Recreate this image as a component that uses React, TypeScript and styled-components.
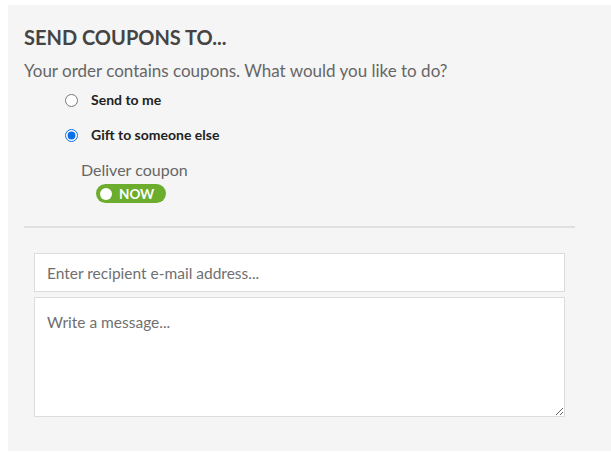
import React from "react";
import styled, { createGlobalStyle } from "styled-components";

const Global = createGlobalStyle`
  html, body { margin: 0; padding: 0; background: #fff; }
  body { padding: 5px 0 0 8px; font-family: Lato, "Liberation Sans", sans-serif; }
  * { box-sizing: border-box; }
`;

const Panel = styled.div`
  background: #f5f5f5;
  width: 603px;
  height: 446px;
  padding: 20px 36px 0 16px;
  display: flex;
  flex-direction: column;
`;

const Title = styled.h2`
  margin: 0;
  font-size: 20px;
  line-height: 24px;
  font-weight: 700;
  color: #444;
  letter-spacing: 0;
`;

const Intro = styled.p`
  margin: 12px 0 0;
  font-size: 17px;
  line-height: 20px;
  color: #666;
`;

const Options = styled.div`
  display: flex;
  flex-direction: column;
  gap: 15px;
  margin: 9px 0 0 41px;
`;

const Option = styled.label`
  display: flex;
  align-items: center;
  gap: 13px;
  font-size: 14px;
  line-height: 20px;
  font-weight: 700;
  color: #222;
`;

const Radio = styled.input`
  margin: 0;
  width: 13px;
  height: 13px;
  accent-color: #0a6fe8;
`;

const Deliver = styled.div`
  margin: 15px 0 0 57px;
  display: flex;
  flex-direction: column;
  align-items: flex-start;
`;

const DeliverLabel = styled.span`
  font-size: 16px;
  line-height: 20px;
  color: #666;
`;

const Toggle = styled.span`
  margin: 4px 0 0 15px;
  display: inline-flex;
  align-items: center;
  gap: 7px;
  width: 70px;
  height: 19px;
  padding: 0 0 0 4px;
  border-radius: 10px;
  background: #6cad2e;
  color: #fff;
  font-size: 13.5px;
  font-weight: 700;
`;

const Knob = styled.span`
  width: 12px;
  height: 12px;
  border-radius: 50%;
  background: #fff;
`;

const Divider = styled.hr`
  margin: 23px 0 0;
  border: 0;
  height: 2px;
  background: #e0e0e0;
`;

const Form = styled.div`
  margin: 25px 0 0 10px;
  width: 531px;
  display: flex;
  flex-direction: column;
  gap: 5px;
`;

const field = `
  width: 100%;
  border: 1px solid #dcdcdc;
  background: #fff;
  font-family: Lato, "Liberation Sans", sans-serif;
  font-size: 15.5px;
  color: #333;
  padding: 0 12px;
  outline: none;
  &::placeholder { color: #6f6f6f; opacity: 1; }
`;

const Email = styled.input`
  ${field}
  height: 39px;
`;

const Message = styled.textarea`
  ${field}
  height: 120px;
  padding-top: 15px;
  resize: vertical;
  display: block;
`;

export default function App() {
  return (
    <>
      <Global />
      <Panel>
        <Title>SEND COUPONS TO...</Title>
        <Intro>Your order contains coupons. What would you like to do?</Intro>
        <Options>
          <Option>
            <Radio type="radio" name="send" />
            Send to me
          </Option>
          <Option>
            <Radio type="radio" name="send" defaultChecked />
            Gift to someone else
          </Option>
        </Options>
        <Deliver>
          <DeliverLabel>Deliver coupon</DeliverLabel>
          <Toggle>
            <Knob />
            NOW
          </Toggle>
        </Deliver>
        <Divider />
        <Form>
          <Email placeholder="Enter recipient e-mail address..." />
          <Message placeholder="Write a message..." />
        </Form>
      </Panel>
    </>
  );
}
